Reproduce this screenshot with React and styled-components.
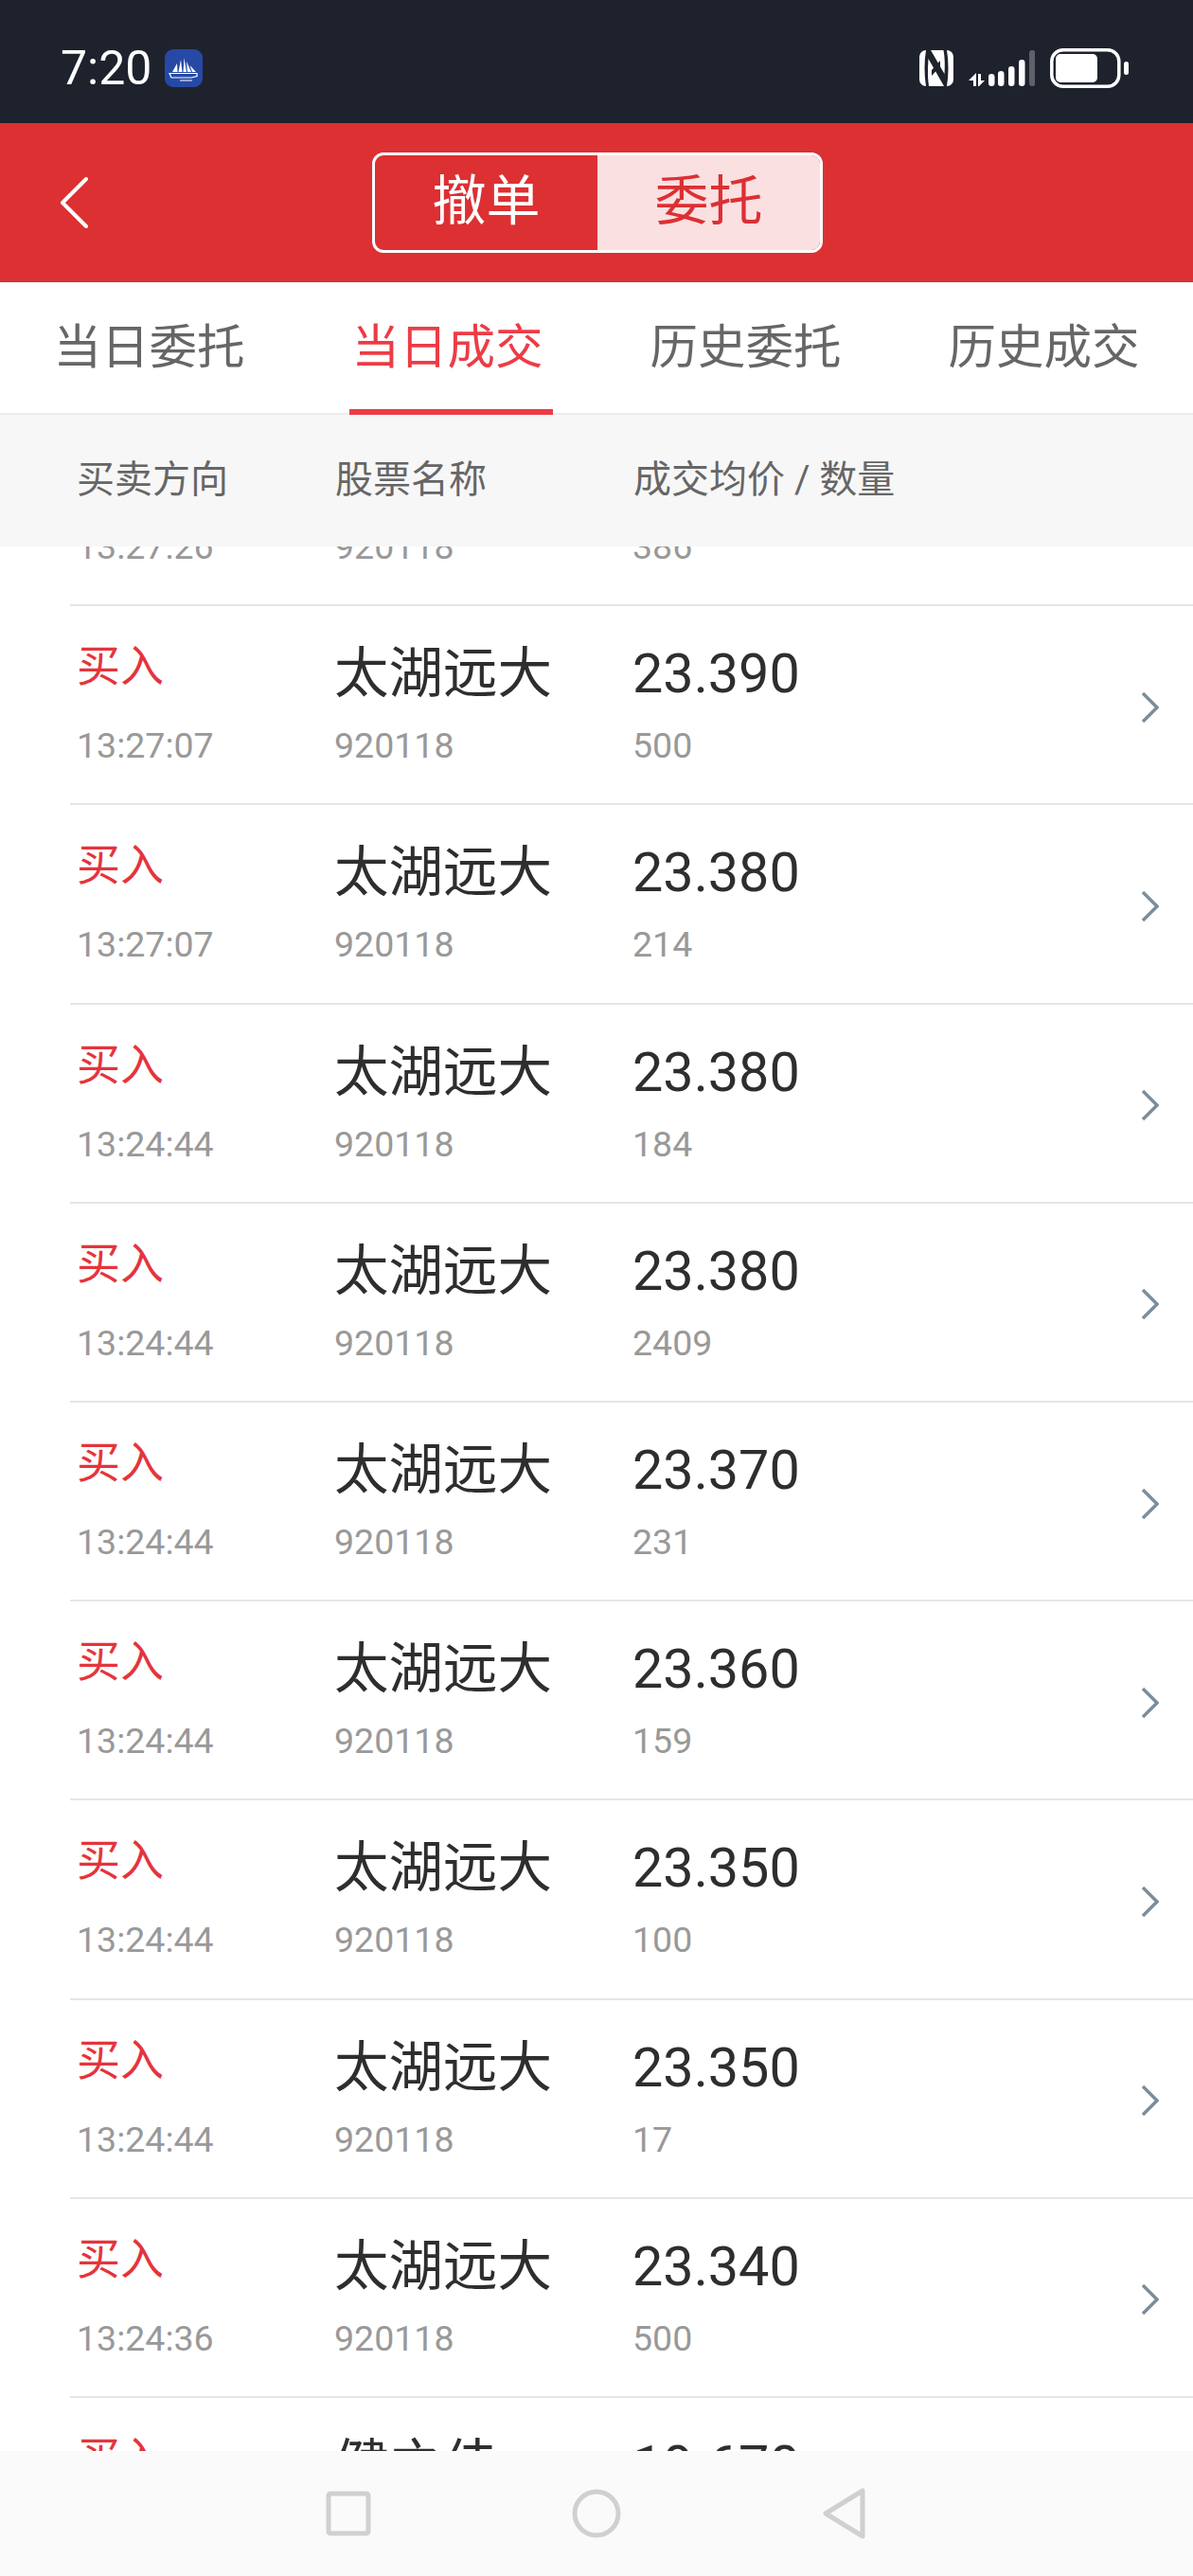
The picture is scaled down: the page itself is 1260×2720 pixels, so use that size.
import React from "react";
import styled, { createGlobalStyle } from "styled-components";

const Global = createGlobalStyle`
  html, body {
    margin: 0;
    padding: 0;
    background: #fff;
  }
  body {
    font-family: Roboto, "Noto Sans CJK SC", sans-serif;
  }
`;

const Page = styled.div`
  display: flex;
  flex-direction: column;
  width: 1260px;
  height: 2720px;
  overflow: hidden;
  background: #fff;
`;

const StatusBar = styled.div`
  display: flex;
  flex: 0 0 130px;
  align-items: center;
  justify-content: space-between;
  padding: 14px 68px 0 64px;
  box-sizing: border-box;
  background: #1e222d;
  color: #fff;
`;

const StatusLeft = styled.div`
  display: flex;
  align-items: center;
  gap: 14px;
`;

const Clock = styled.span`
  font-size: 50px;
  line-height: 50px;
`;

const StatusRight = styled.div`
  display: flex;
  align-items: center;
`;

const Nfc = styled.svg`
  width: 36px;
  height: 38px;
  margin-right: 16px;
`;

const Signal = styled.svg`
  width: 70px;
  height: 40px;
  margin-right: 16px;
`;

const Battery = styled.svg`
  width: 83px;
  height: 42px;
`;

const NavBar = styled.div`
  display: grid;
  flex: 0 0 168px;
  grid-template-columns: 393px 476px 1fr;
  align-items: center;
  background: #dc3033;
`;

const Back = styled.svg`
  width: 30px;
  height: 54px;
  margin-left: 63px;
  display: block;
`;

const Segment = styled.div`
  display: flex;
  height: 106px;
  box-sizing: border-box;
  border: 3px solid #fff;
  border-radius: 12px;
  overflow: hidden;
`;

const SegmentItem = styled.div`
  flex: 1;
  text-align: center;
  font-size: 57px;
  line-height: 98px;
  color: ${props => (props.$on ? "#dc3033" : "#fff")};
  background: ${props => (props.$on ? "#fae0e1" : "transparent")};
`;

const Tabs = styled.div`
  display: grid;
  flex: 0 0 140px;
  box-sizing: border-box;
  grid-template-columns: repeat(4, 315px);
  border-bottom: 2px solid #ececec;
`;

const Tab = styled.div`
  position: relative;
  text-align: center;
  font-size: 50.5px;
  line-height: 138px;
  color: ${props => (props.$on ? "#ec3c46" : "#666")};
  ${props => props.$on && `
    &::after {
      content: "";
      position: absolute;
      left: 54px;
      bottom: -2px;
      width: 215px;
      height: 6px;
      background: #ec3c46;
    }
  `}
`;

const HeadRow = styled.div`
  display: grid;
  flex: 0 0 139px;
  grid-template-columns: 273px 315px 1fr;
  align-items: center;
  padding: 0 0 10px 81px;
  box-sizing: border-box;
  background: #f7f7f7;
  font-size: 40px;
  color: #666;
`;

const List = styled.div`
  flex: 1;
  min-height: 0;
  overflow: hidden;
`;

const ListInner = styled.div`
  margin-top: -147px;
`;

const Row = styled.div`
  display: grid;
  grid-template-columns: 272px 315px 1fr 19px;
  height: 210.2px;
  box-sizing: border-box;
  margin-left: 74px;
  padding: 36px 36px 0 7px;
  border-bottom: 2px solid #e6e6e6;
`;

const Cell = styled.div`
  display: flex;
  flex-direction: column;
`;

const Side = styled.div`
  height: 68px;
  font-size: 46px;
  line-height: 54px;
  color: #e5343c;
`;

const Main = styled.div`
  height: 68px;
  font-size: 57.5px;
  line-height: 71px;
  color: #2e2e2e;
`;

const Sub = styled.div`
  margin-top: 21px;
  font-size: 37.5px;
  line-height: 44px;
  color: #999;
`;

const Chevron = styled.svg`
  width: 19px;
  height: 34px;
  align-self: center;
  margin-top: -31px;
`;

const BottomBar = styled.div`
  display: grid;
  flex: 0 0 132px;
  grid-template-columns: repeat(3, 262px);
  justify-content: center;
  justify-items: center;
  align-items: center;
  background: #fafafa;
`;

const NavIcon = styled.svg`
  width: 54px;
  height: 54px;
  fill: none;
  stroke: #d0d0d0;
  stroke-width: 5;
  stroke-linejoin: round;
`;

const trades = [
  { time: "13:27:26", name: "太湖远大", code: "920118", price: "23.390", qty: "386" },
  { time: "13:27:07", name: "太湖远大", code: "920118", price: "23.390", qty: "500" },
  { time: "13:27:07", name: "太湖远大", code: "920118", price: "23.380", qty: "214" },
  { time: "13:24:44", name: "太湖远大", code: "920118", price: "23.380", qty: "184" },
  { time: "13:24:44", name: "太湖远大", code: "920118", price: "23.380", qty: "2409" },
  { time: "13:24:44", name: "太湖远大", code: "920118", price: "23.370", qty: "231" },
  { time: "13:24:44", name: "太湖远大", code: "920118", price: "23.360", qty: "159" },
  { time: "13:24:44", name: "太湖远大", code: "920118", price: "23.350", qty: "100" },
  { time: "13:24:44", name: "太湖远大", code: "920118", price: "23.350", qty: "17" },
  { time: "13:24:36", name: "太湖远大", code: "920118", price: "23.340", qty: "500" },
  { time: "13:24:30", name: "健之佳", code: "605266", price: "19.670", qty: "100" },
];

const AppIcon = () => (
  <svg width="40" height="40" viewBox="0 0 40 40">
    <rect width="40" height="40" rx="9" fill="#2649a6" />
    <path d="M8 24 L13 15 L13.5 24 Z M14.5 24 L17 11 L18.5 24 Z M19.5 24 L20.5 9 L23 24 Z M24 24 L23 13 L28 24 Z M29 24 L26.5 17 L33 24 Z" fill="#fff" />
    <path d="M5 25.5 H34 V28.5 L28 30 H7 Z M16 33 H29" fill="none" stroke="#fff" strokeWidth="1.2" />
  </svg>
);

const Bars = [
  { x: 21, y: 26, h: 13, c: "#fff" },
  { x: 31, y: 23, h: 16, c: "#fff" },
  { x: 42, y: 18, h: 21, c: "#fff" },
  { x: 53, y: 11, h: 28, c: "#fff" },
  { x: 64, y: 1, h: 38, c: "#5d616b" },
];

const App = () => (
  <Page>
    <Global />
    <StatusBar>
      <StatusLeft>
        <Clock>7:20</Clock>
        <AppIcon />
      </StatusLeft>
      <StatusRight>
        <Nfc viewBox="0 0 36 38">
          <rect width="36" height="38" rx="7" fill="#fff" />
          <path d="M7 0 C5 12 5 26 7 38 H10 C8.5 26 9 18 9.5 9 L26 38 H29 C31 26 31 12 29 0 H25.5 C27 8 27 16 26.5 25 L12 0 Z" fill="#1e222d" />
          <path d="M13 21 L22 11 V17 L13 27 Z" fill="#1e222d" />
        </Nfc>
        <Signal viewBox="0 0 70 40">
          <path d="M0 33 L8 25 V39 H5 V33 Z M10 26 H13 V33 H17 L11 39 H10 Z" fill="#fff" />
          {Bars.map(b => (
            <rect key={b.x} x={b.x} y={b.y} width="6.5" height={b.h} rx="3.2" fill={b.c} />
          ))}
        </Signal>
        <Battery viewBox="0 0 83 42">
          <rect x="1.8" y="1.8" width="71" height="38.4" rx="12" fill="none" stroke="#fff" strokeWidth="3.5" />
          <rect x="6" y="6" width="44" height="30" rx="5" fill="#fff" />
          <rect x="78" y="14" width="5" height="14" rx="2.5" fill="#fff" />
        </Battery>
      </StatusRight>
    </StatusBar>

    <NavBar>
      <Back viewBox="0 0 30 54">
        <path d="M28 2 L3 27 L28 52" fill="none" stroke="#fff" strokeWidth="4" strokeLinecap="round" strokeLinejoin="round" />
      </Back>
      <Segment>
        <SegmentItem>撤单</SegmentItem>
        <SegmentItem $on>委托</SegmentItem>
      </Segment>
    </NavBar>

    <Tabs>
      <Tab>当日委托</Tab>
      <Tab $on>当日成交</Tab>
      <Tab>历史委托</Tab>
      <Tab>历史成交</Tab>
    </Tabs>

    <HeadRow>
      <span>买卖方向</span>
      <span>股票名称</span>
      <span>成交均价 / 数量</span>
    </HeadRow>

    <List>
      <ListInner>
        {trades.map((t, i) => (
          <Row key={i}>
            <Cell>
              <Side>买入</Side>
              <Sub>{t.time}</Sub>
            </Cell>
            <Cell>
              <Main>{t.name}</Main>
              <Sub>{t.code}</Sub>
            </Cell>
            <Cell>
              <Main>{t.price}</Main>
              <Sub>{t.qty}</Sub>
            </Cell>
            <Chevron viewBox="0 0 19 34">
              <path d="M2 2 L17 17 L2 32" fill="none" stroke="#7b8d9b" strokeWidth="3.4" />
            </Chevron>
          </Row>
        ))}
      </ListInner>
    </List>

    <BottomBar>
      <NavIcon viewBox="0 0 54 54">
        <rect x="6" y="6" width="42" height="42" rx="2" />
      </NavIcon>
      <NavIcon viewBox="0 0 54 54">
        <circle cx="27" cy="27" r="23" />
      </NavIcon>
      <NavIcon viewBox="0 0 54 54">
        <path d="M46 3 V51 L7 27 Z" />
      </NavIcon>
    </BottomBar>
  </Page>
);

export default App;
